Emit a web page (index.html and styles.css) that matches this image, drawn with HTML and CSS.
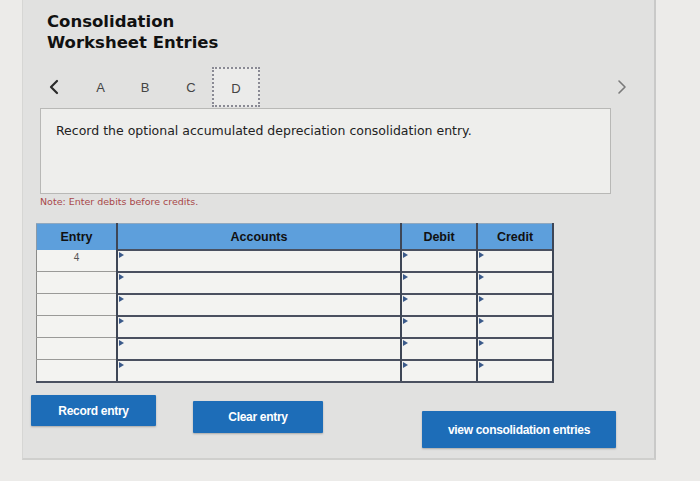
FILE: index.html
```html
<!DOCTYPE html>
<html>
<head>
<meta charset="utf-8">
<link rel="stylesheet" href="styles.css">
</head>
<body>
<div class="panel">
  <h1 class="title">Consolidation<br>Worksheet Entries</h1>
  <div class="tabs">
    <span class="arrow"><svg width="10" height="16" viewBox="0 0 10 16"><path d="M8 2 L2 8 L8 14" fill="none" stroke="#2a2a2a" stroke-width="2.2" stroke-linecap="round" stroke-linejoin="round"/></svg></span>
    <span class="tab">A</span>
    <span class="tab">B</span>
    <span class="tab">C</span>
    <span class="tab active">D</span>
    <span class="spacer"></span>
    <span class="arrow right"><svg width="10" height="16" viewBox="0 0 10 16"><path d="M2 2 L8 8 L2 14" fill="none" stroke="#7a7a7a" stroke-width="1.6" stroke-linecap="round" stroke-linejoin="round"/></svg></span>
  </div>
  <div class="prompt">Record the optional accumulated depreciation consolidation entry.</div>
  <p class="note">Note: Enter debits before credits.</p>
  <table class="grid">
    <thead>
      <tr><th class="c-entry">Entry</th><th class="c-acc">Accounts</th><th class="c-num">Debit</th><th class="c-num">Credit</th></tr>
    </thead>
    <tbody>
      <tr><td class="c-entry">4</td><td class="cell"></td><td class="cell"></td><td class="cell"></td></tr>
      <tr><td class="c-entry"></td><td class="cell"></td><td class="cell"></td><td class="cell"></td></tr>
      <tr><td class="c-entry"></td><td class="cell"></td><td class="cell"></td><td class="cell"></td></tr>
      <tr><td class="c-entry"></td><td class="cell"></td><td class="cell"></td><td class="cell"></td></tr>
      <tr><td class="c-entry"></td><td class="cell"></td><td class="cell"></td><td class="cell"></td></tr>
      <tr><td class="c-entry"></td><td class="cell"></td><td class="cell"></td><td class="cell"></td></tr>
    </tbody>
  </table>
  <div class="actions">
    <button class="btn b1">Record entry</button>
    <button class="btn b2">Clear entry</button>
    <button class="btn b3">view consolidation entries</button>
  </div>
</div>
</body>
</html>
```
FILE: styles.css
```css
html, body { margin: 0; padding: 0; }
body {
  background: #ecebe9;
  width: 700px;
  height: 481px;
  overflow: hidden;
  font-family: "DejaVu Sans", Verdana, sans-serif;
}
.panel {
  margin-left: 22px;
  width: 634px;
  height: 460px;
  background: #e1e1e0;
  border-right: 2px solid #c9c9c8;
  border-bottom: 2px solid #cfcfcd;
  border-left: 1px solid #d6d6d4;
  box-sizing: border-box;
  padding: 11px 0 0 18px;
}
.title {
  margin: 0;
  font-size: 16.5px;
  line-height: 21px;
  font-weight: bold;
  color: #111;
  margin-left: 6px;
}
.tabs {
  display: flex;
  align-items: center;
  margin-top: 13px;
  height: 42px;
  width: 586px;
  font-family: "Liberation Sans", Arial, sans-serif;
  color: #444;
  font-size: 13px;
}
.arrow {
  display: flex;
  align-items: center;
  margin-left: 8px;
  width: 30px;
}
.arrow.right { width: auto; margin-left: 0; }
.tab { width: 46px; text-align: center; }
.tab:nth-child(2) { width: 43px; }
.tab.active {
  width: 48px;
  height: 40px;
  line-height: 40px;
  border: 2px dotted #8a8a94;
  background: #ebebea;
  box-sizing: border-box;
  margin-left: -2px;
}
.spacer { flex: 1; }
.prompt {
  margin-left: -1px;
  width: 571px;
  height: 86px;
  box-sizing: border-box;
  border: 1px solid #b8b8b6;
  background: #eeeeec;
  padding: 14px 0 0 15px;
  font-size: 12.5px;
  color: #222;
}
.note {
  margin: 1px 0 0 -1px;
  line-height: 14px;
  font-size: 9.5px;
  color: #a8484a;
}
.grid {
  margin-top: 14px;
  margin-left: -5px;
  border-collapse: collapse;
  font-family: "Liberation Sans", Arial, sans-serif;
}
.grid th {
  background: #5d9fdc;
  height: 25px;
  font-size: 12.5px;
  font-weight: bold;
  color: #111;
  padding: 0;
  border-top: 1px solid #8fa8c0;
}
.grid th.c-entry { width: 79px; border-right: 2px solid #3e4656; border-left: 1px solid #8a9aa8; }
.grid th.c-acc { width: 282px; border-right: 2px solid #3e4656; }
.grid th.c-num { width: 74px; border-right: 2px solid #3e4656; }
.grid td {
  height: 19px;
  padding: 0;
  background: #f3f3f1;
}
.grid td.c-entry {
  border-left: 1px solid #8a8a88;
  border-bottom: 1px solid #9a9a98;
  border-right: 2px solid #3e4656;
  text-align: center;
  font-size: 10px;
  color: #555;
  vertical-align: top;
  padding-top: 2px;
}
.grid td.cell {
  border-top: 2px solid #4a5060;
  border-right: 2px solid #3e4656;
  position: relative;
}
.grid tbody tr:last-child td { border-bottom: 2px solid #4a5060; }
.grid td.cell::before {
  content: "";
  position: absolute;
  left: 1px;
  top: 1px;
  border-left: 5px solid #3b5a8a;
  border-top: 3px solid transparent;
  border-bottom: 3px solid transparent;
}
.actions {
  display: flex;
  align-items: flex-start;
  margin-left: -10px;
  margin-top: 12px;
}
.btn {
  background: #1d6db8;
  color: #fff;
  border: none;
  border-radius: 1px;
  font-family: "Liberation Sans", Arial, sans-serif;
  font-weight: bold;
  font-size: 12px;
  letter-spacing: -0.3px;
  box-shadow: 0 1px 2px rgba(0,0,0,0.25);
  padding: 0;
}
.b1 { width: 125px; height: 31px; margin-top: 0; }
.b2 { width: 130px; height: 32px; margin-left: 37px; margin-top: 6px; }
.b3 { width: 194px; height: 37px; margin-left: 99px; margin-top: 16px; }
```
